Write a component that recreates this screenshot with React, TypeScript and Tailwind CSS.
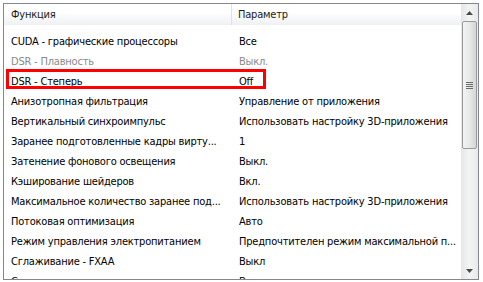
const rows: { name: string; value: string; muted?: boolean }[] = [
  { name: "CUDA - графические процессоры", value: "Все" },
  { name: "DSR - Плавность", value: "Выкл.", muted: true },
  { name: "DSR - Степерь", value: "Off" },
  { name: "Анизотропная фильтрация", value: "Управление от приложения" },
  { name: "Вертикальный синхроимпульс", value: "Использовать настройку 3D-приложения" },
  { name: "Заранее подготовленные кадры вирту...", value: "1" },
  { name: "Затенение фонового освещения", value: "Выкл." },
  { name: "Кэширование шейдеров", value: "Вкл." },
  { name: "Максимальное количество заранее под...", value: "Использовать настройку 3D-приложения" },
  { name: "Потоковая оптимизация", value: "Авто" },
  { name: "Режим управления электропитанием", value: "Предпочтителен режим максимальной п..." },
  { name: "Сглаживание - FXAA", value: "Выкл" },
  { name: "Сглаживание - гамма-коррекция", value: "Вкл." },
];

function Arrow({ up }: { up?: boolean }) {
  return (
    <svg width="7" height="4" viewBox="0 0 7 4" aria-hidden="true">
      {up ? <path d="M3.5 0 L7 4 L0 4 Z" fill="#4a4a4a" /> : <path d="M0 0 L7 0 L3.5 4 Z" fill="#4a4a4a" />}
    </svg>
  );
}

export default function App() {
  return (
    <div
      className="w-[483px] h-[282px] bg-white pt-[3px] pl-[3px] pr-[4px] pb-[2px] overflow-hidden"
      style={{ fontFamily: '"DejaVu Sans Condensed", "Liberation Sans", sans-serif' }}
    >
      <div className="relative flex h-[277px] border border-[#828790] bg-white overflow-hidden">
        {/* list */}
        <div className="flex-1 flex flex-col min-w-0">
          <div className="flex h-[21px] shrink-0 bg-gradient-to-b from-white from-40% to-[#eef0f2] text-[11px] tracking-[-0.2px] text-[#1a1a1a] leading-none">
            <div className="w-[228px] flex items-center pl-[7px] border-r border-[#dfe1e4]">Функция</div>
            <div className="flex-1 flex items-center pl-[6px]">Параметр</div>
          </div>
          <div className="flex flex-col pt-[6px] text-[11px] tracking-[-0.2px] leading-none">
            {rows.map((r) => (
              <div
                key={r.name}
                className={`flex h-[20px] items-center shrink-0 ${r.muted ? "text-[#8a8a8a]" : "text-black"}`}
              >
                <div className="w-[229px] pl-[7px] whitespace-nowrap overflow-hidden">{r.name}</div>
                <div className="flex-1 pl-[6px] whitespace-nowrap overflow-hidden">{r.value}</div>
              </div>
            ))}
          </div>
        </div>

        {/* scrollbar */}
        <div className="w-[17px] shrink-0 flex flex-col bg-gradient-to-r from-[#e6e6e6] via-[#f4f4f4] to-[#e9e9e9]">
          <div className="h-[17px] flex items-center justify-center">
            <Arrow up />
          </div>
          <div className="flex-1 relative px-[1px]">
            <div className="h-[128px] rounded-[2px] border border-[#9a9a9a] bg-gradient-to-r from-[#f3f3f3] via-[#e8e8e8] to-[#d6d6d6] flex items-center justify-center">
              <div className="flex flex-col gap-[1px]">
                <div className="w-[7px] h-[1px] bg-[#6b6b6b]" />
                <div className="w-[7px] h-[1px] bg-[#6b6b6b]" />
                <div className="w-[7px] h-[1px] bg-[#6b6b6b]" />
                <div className="w-[7px] h-[1px] bg-[#6b6b6b]" />
              </div>
            </div>
          </div>
          <div className="h-[17px] flex items-center justify-center">
            <Arrow />
          </div>
        </div>

        {/* highlight annotation */}
        <div className="absolute left-[2px] top-[65px] w-[260px] h-[20px] border-[3px] border-[#ff0000] pointer-events-none" />
      </div>
    </div>
  );
}
